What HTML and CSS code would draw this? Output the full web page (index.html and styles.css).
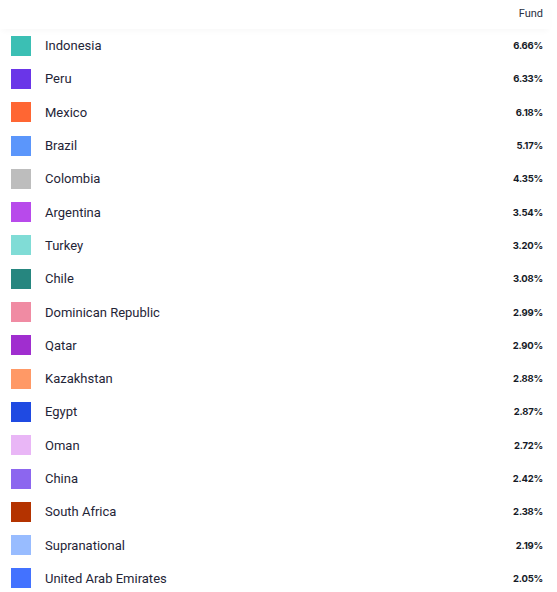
FILE: index.html
```html
<!DOCTYPE html>
<html>
<head>
<meta charset="utf-8">
<link rel="stylesheet" href="styles.css">
</head>
<body>
<div class="table">
  <div class="head"><span class="head-label">Fund</span></div>
  <ul class="rows">
    <li class="row"><span class="sw" style="background:#3bbfb4"></span><span class="name">Indonesia</span><span class="val">6.66%</span></li>
    <li class="row"><span class="sw" style="background:#6a35e8"></span><span class="name">Peru</span><span class="val">6.33%</span></li>
    <li class="row"><span class="sw" style="background:#ff6633"></span><span class="name">Mexico</span><span class="val">6.18%</span></li>
    <li class="row"><span class="sw" style="background:#5b96fb"></span><span class="name">Brazil</span><span class="val">5.17%</span></li>
    <li class="row"><span class="sw" style="background:#bdbdbd"></span><span class="name">Colombia</span><span class="val">4.35%</span></li>
    <li class="row"><span class="sw" style="background:#b84aeb"></span><span class="name">Argentina</span><span class="val">3.54%</span></li>
    <li class="row"><span class="sw" style="background:#80dcd6"></span><span class="name">Turkey</span><span class="val">3.20%</span></li>
    <li class="row"><span class="sw" style="background:#26867f"></span><span class="name">Chile</span><span class="val">3.08%</span></li>
    <li class="row"><span class="sw" style="background:#f08ba3"></span><span class="name">Dominican Republic</span><span class="val">2.99%</span></li>
    <li class="row"><span class="sw" style="background:#a02ecf"></span><span class="name">Qatar</span><span class="val">2.90%</span></li>
    <li class="row"><span class="sw" style="background:#ff9966"></span><span class="name">Kazakhstan</span><span class="val">2.88%</span></li>
    <li class="row"><span class="sw" style="background:#1f4ae2"></span><span class="name">Egypt</span><span class="val">2.87%</span></li>
    <li class="row"><span class="sw" style="background:#e9b6f6"></span><span class="name">Oman</span><span class="val">2.72%</span></li>
    <li class="row"><span class="sw" style="background:#8c66ef"></span><span class="name">China</span><span class="val">2.42%</span></li>
    <li class="row"><span class="sw" style="background:#b43300"></span><span class="name">South Africa</span><span class="val">2.38%</span></li>
    <li class="row"><span class="sw" style="background:#98bcff"></span><span class="name">Supranational</span><span class="val">2.19%</span></li>
    <li class="row"><span class="sw" style="background:#4372ff"></span><span class="name">United Arab Emirates</span><span class="val">2.05%</span></li>
  </ul>
</div>
</body>
</html>
```
FILE: styles.css
```css
html, body {
  margin: 0;
  padding: 0;
  background: #fff;
}
body {
  font-family: Roboto, "Liberation Sans", sans-serif;
  color: #1f2537;
}
.table {
  width: 557px;
}
.head {
  width: 550px;
  height: 29px;
  box-sizing: border-box;
  display: flex;
  justify-content: flex-end;
  align-items: center;
  padding-right: 7px;
  padding-bottom: 2px;
  position: relative;
  z-index: 1;
  box-shadow: 0 4px 6px -2px rgba(0,0,0,0.03);
}
.head-label {
  font-size: 11px;
  color: #2a3142;
}
.rows {
  list-style: none;
  margin: 0;
  padding: 0;
}
.row {
  height: 33.3px;
  display: flex;
  align-items: center;
  padding-left: 11px;
  padding-right: 14px;
}
.sw {
  width: 20px;
  height: 20px;
  flex: none;
}
.name {
  margin-left: 14px;
  font-size: 13px;
  flex: 1;
}
.val {
  font-family: Inter, "Liberation Sans", sans-serif;
  font-weight: 700;
  font-size: 9.5px;
  letter-spacing: -0.2px;
  color: #151a27;
}
```
